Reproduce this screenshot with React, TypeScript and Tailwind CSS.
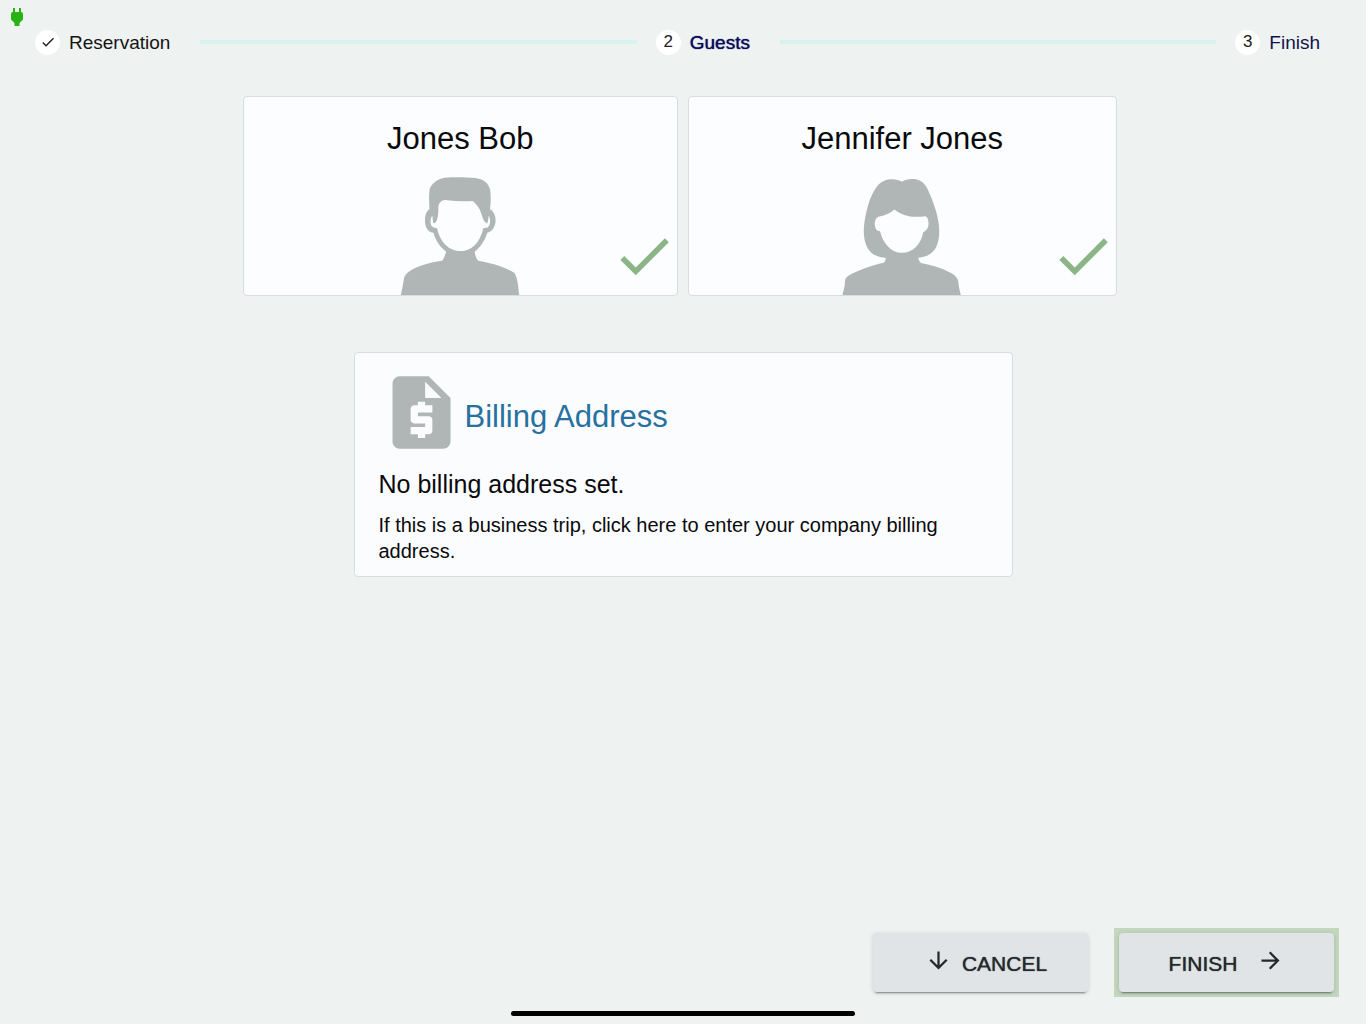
import clsx from 'clsx';
import { Fragment } from 'react';
import { MdArrowDownward, MdArrowForward, MdCheck, MdPower, MdRequestQuote } from 'react-icons/md';

interface Step {
  label: string;
  state: 'done' | 'active' | 'upcoming';
}

const steps: Step[] = [
  { label: 'Reservation', state: 'done' },
  { label: 'Guests', state: 'active' },
  { label: 'Finish', state: 'upcoming' },
];

function Stepper() {
  return (
    <ol className="flex items-center pl-[35px] pr-[46px] h-6">
      {steps.map((step, i) => (
        <Fragment key={step.label}>
          {i > 0 && <li aria-hidden="true" className="flex-1 h-1 ml-[30px] mr-[19px] bg-[#d6f3f2]" />}
          <li
            aria-current={step.state === 'active' ? 'step' : undefined}
            className="flex items-center gap-[9px] text-[19px] leading-6"
          >
            <span className="flex items-center justify-center w-[25px] h-[25px] rounded-full bg-white text-[17px] text-[#202020]">
              {step.state === 'done' ? <MdCheck size={16} /> : i + 1}
            </span>
            <span
              className={clsx(
                'pt-0.5',
                step.state === 'done' && 'text-[#141414]',
                step.state === 'active' && 'text-[#0b0b5c] [text-shadow:0_0_1px_currentColor]',
                step.state === 'upcoming' && 'text-[#12124a]',
              )}
            >
              {step.label}
            </span>
          </li>
        </Fragment>
      ))}
    </ol>
  );
}

function ManIcon() {
  return (
    <svg viewBox="60 200 360 355" className="w-[120px] h-[118px]" fill="currentColor" fillRule="evenodd" aria-hidden="true">
      <path
        d="M148 297C147 275 146 250 149 236C154 222 168 206 194 202C222 200 258 200 286 203C308 205 327 218 331 240C333 258 333 278 330 297
          C342 303 348 318 347 334C345 352 337 364 322 368C315 392 301 412 284 425C286 437 289 446 295 452C334 459 374 470 403 488C413 500 415 528 418 555
          H62C66 538 69 520 72 502C77 488 100 475 122 467C145 459 166 455 187 452C192 444 196 434 198 424C180 412 166 390 160 368
          C145 366 136 354 135 336C134 318 138 303 148 297Z
          M202 270C188 266 176 275 175 290C175 310 173 325 169 333C166 338 163 339 160 339C158 332 158 324 157 317C149 322 150 345 157 350
          C162 353 167 354 171 354C178 385 197 421 242 423C285 421 303 385 310 354C316 354 321 353 325 350C332 343 332 322 326 317C325 325 325 333 322 340
          C313 337 309 328 305 313C300 294 290 283 279 272C255 274 228 274 202 270Z"
      />
    </svg>
  );
}

function WomanIcon() {
  return (
    <svg viewBox="70 200 360 355" className="w-[120px] h-[118px]" fill="currentColor" fillRule="evenodd" aria-hidden="true">
      <path
        d="M250 214C238 206 214 204 197 211C174 219 160 250 150 278C141 307 135 340 135 365C136 390 141 410 154 424C166 437 184 442 201 443
          C201 449 199 454 195 458C160 466 118 480 92 495C76 505 79 512 78 524C76 536 73 546 71 555H427C424 544 421 532 420 520C419 504 411 496 396 488
          C370 474 338 465 307 459C303 455 300 450 299 443C331 440 350 424 357 400C362 384 363 366 361 345C357 309 344 273 328 238C316 213 300 206 281 206
          C268 206 258 209 250 214Z
          M227 298C213 310 200 316 182 319C172 321 168 330 168 343C169 356 174 363 184 363C192 399 217 428 250 428C283 428 307 401 314 366
          C325 361 330 352 330 341C330 329 327 321 321 318C280 323 253 319 227 298Z"
      />
    </svg>
  );
}

function GuestCard({ name, icon }: { name: string; icon: React.ReactNode }) {
  return (
    <button
      type="button"
      className="relative flex flex-col items-center h-[200px] pt-6 rounded-[4px] border border-[#dadddd] bg-[#fbfdfe] overflow-hidden"
    >
      <span className="text-[31px] leading-9 text-[#0a0a0c]">{name}</span>
      <span className="mt-auto text-[#b0b6b6]">{icon}</span>
      <MdCheck size={66} className="absolute right-0 bottom-1.5 text-[#8cb587]" />
    </button>
  );
}

function BillingCard() {
  return (
    <button
      type="button"
      className="block w-full max-w-[659px] mx-auto mt-14 px-6 pt-4 pb-3 text-left rounded-[4px] border border-[#dadddd] bg-[#fbfcfe]"
    >
      <span className="flex items-center -ml-px">
        <MdRequestQuote size={87} className="text-[#b0b6b6]" />
        <span className="pt-2 text-[31px] leading-9 text-[#26719f]">Billing Address</span>
      </span>
      <span className="block mt-3 text-[25px] leading-8 text-[#0a0a0c]">No billing address set.</span>
      <span className="block mt-3 text-[20px] leading-[26px] text-[#0a0a0c]">
        If this is a business trip, click here to enter your company billing address.
      </span>
    </button>
  );
}

const actionButton =
  'flex items-center justify-center w-[215px] h-[59px] rounded-[4px] bg-[#e1e4e7] text-[21px] text-[#26292c] [text-shadow:0_0_1px_currentColor] shadow-[0_3px_2px_-2px_rgba(0,0,0,0.4),0_1px_4px_rgba(0,0,0,0.16)]';

export default function App() {
  return (
    <div
      className="flex flex-col min-h-screen bg-[#eef2f1]"
      style={{ fontFamily: '"Liberation Sans", Arial, sans-serif' }}
    >
      <div className="h-[30px] pl-[5px] pt-[5px]">
        <MdPower size={24} className="text-[#29b214]" />
      </div>

      <Stepper />

      <main className="mt-[42px] px-6">
        <div className="pr-1.5">
          <div className="grid grid-cols-[434fr_429fr] gap-[10px] w-full max-w-[874px] mx-auto">
            <GuestCard name="Jones Bob" icon={<ManIcon />} />
            <GuestCard name="Jennifer Jones" icon={<WomanIcon />} />
          </div>
        </div>
        <BillingCard />
      </main>

      <footer className="mt-auto">
        <div className="flex items-center justify-end gap-[26px] pr-[27px]">
          <button type="button" className={clsx(actionButton, 'gap-[10px] pl-[11px]')}>
            <MdArrowDownward size={27} className="mb-1" />
            <span className="pt-0.5">CANCEL</span>
          </button>
          <div className="p-[5px] bg-[#c3d7bf]">
            <button type="button" className={clsx(actionButton, 'gap-5')}>
              <span className="pt-0.5">FINISH</span>
              <MdArrowForward size={27} className="mb-1" />
            </button>
          </div>
        </div>
        <div className="w-[344px] h-[5px] mx-auto mt-3.5 mb-2 rounded-full bg-black" />
      </footer>
    </div>
  );
}
